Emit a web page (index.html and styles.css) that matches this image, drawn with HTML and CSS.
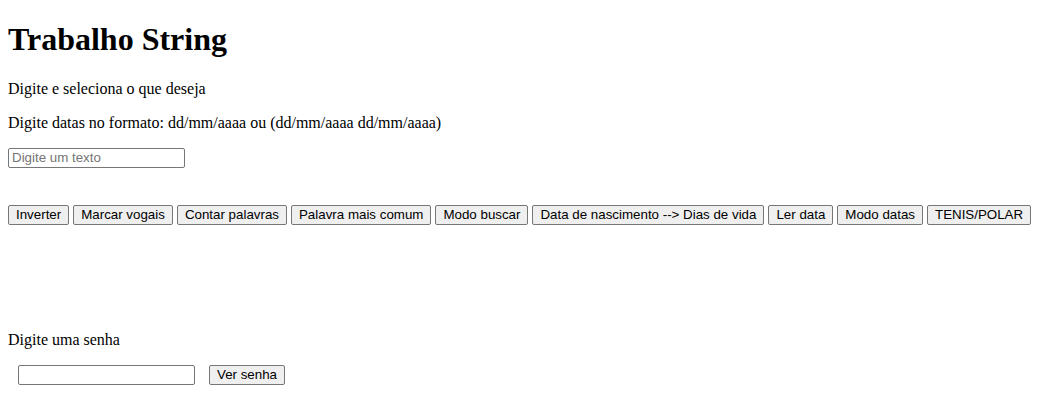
FILE: index.html
```html
<!DOCTYPE html>
<html lang="pt">
<head>
<meta charset="utf-8">
<title>Trabalho String</title>
<link rel="stylesheet" href="styles.css">
</head>
<body class="page">
  <h1 class="title">Trabalho String</h1>
  <p class="text">Digite e seleciona o que deseja</p>
  <p class="text">Digite datas no formato: dd/mm/aaaa ou (dd/mm/aaaa dd/mm/aaaa)</p>
  <div class="field-row">
    <input class="field" type="text" placeholder="Digite um texto">
  </div>
  <div class="actions">
    <button class="btn" type="button">Inverter</button>
    <button class="btn" type="button">Marcar vogais</button>
    <button class="btn" type="button">Contar palavras</button>
    <button class="btn" type="button">Palavra mais comum</button>
    <button class="btn" type="button">Modo buscar</button>
    <button class="btn" type="button">Data de nascimento --&gt; Dias de vida</button>
    <button class="btn" type="button">Ler data</button>
    <button class="btn" type="button">Modo datas</button>
    <button class="btn" type="button">TENIS/POLAR</button>
  </div>
  <p class="text senha-label">Digite uma senha</p>
  <div class="senha-row">
    <input class="field" type="password">
    <button class="btn" type="button">Ver senha</button>
  </div>
</body>
</html>
```
FILE: styles.css
```css
html, body {
  background: #ffffff;
}
.page {
  margin: 0;
  padding: 0 8px;
  font-family: "Liberation Serif", "Times New Roman", serif;
  font-size: 16px;
  color: #000000;
}
.title {
  font-size: 32px;
  font-weight: bold;
  margin: 0 0 21.44px;
  padding-top: 21.44px;
  line-height: normal;
}
.text {
  margin: 16px 0;
  line-height: normal;
}
.field-row {
  display: flex;
  margin-top: 16px;
}
.field {
  box-sizing: border-box;
  width: 177px;
  height: 20px;
  padding: 1px 3px;
  border: 1px solid #767676;
  border-radius: 2px;
  font-family: "Liberation Sans", Arial, sans-serif;
  font-size: 13.333px;
  color: #000000;
  background: #ffffff;
}
.field::placeholder {
  color: #757575;
}
.actions {
  display: flex;
  flex-wrap: wrap;
  gap: 4px;
  margin-top: 37px;
}
.btn {
  box-sizing: border-box;
  height: 20px;
  padding: 1px 7px;
  border: 1px solid #767676;
  border-radius: 2px;
  background: #efefef;
  font-family: "Liberation Sans", Arial, sans-serif;
  font-size: 13.333px;
  color: #000000;
  line-height: normal;
}
.senha-label {
  margin-top: 106px;
  margin-bottom: 16px;
}
.senha-row {
  display: flex;
  align-items: center;
  gap: 14px;
  padding-left: 10px;
}
```
